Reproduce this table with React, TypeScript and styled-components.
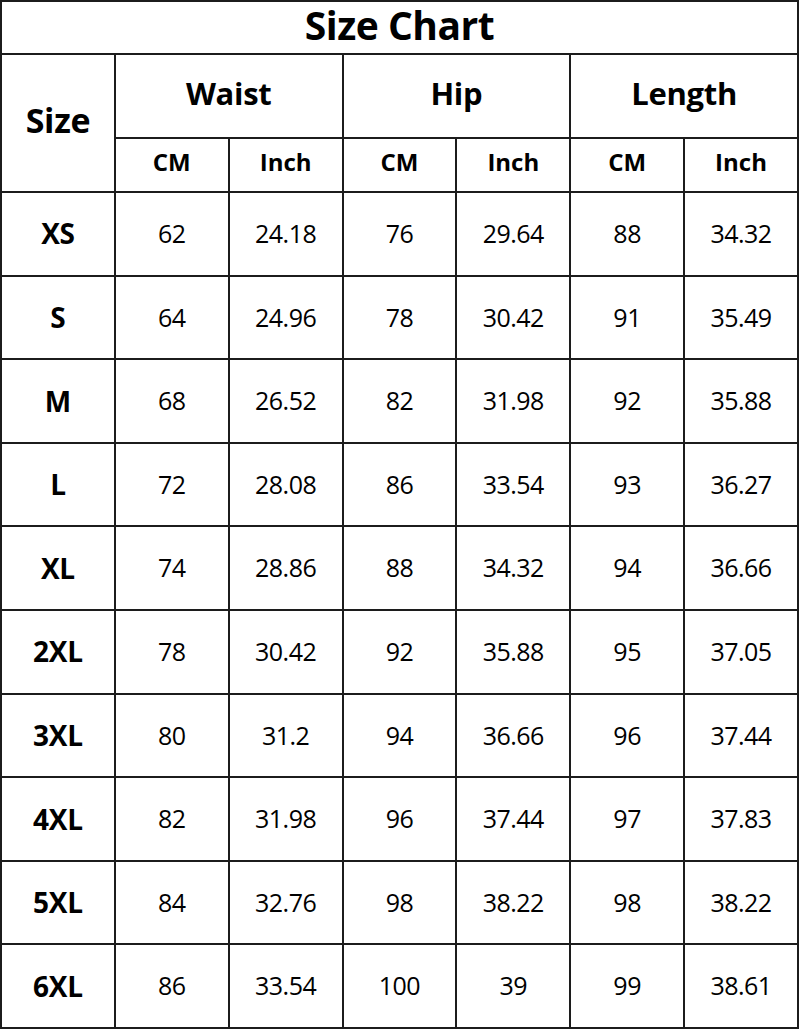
import {Fragment} from "react"
import styled, {createGlobalStyle} from "styled-components"

const rows: [string, string, string, string, string, string, string][] = [
    ["XS", "62", "24.18", "76", "29.64", "88", "34.32"],
    ["S", "64", "24.96", "78", "30.42", "91", "35.49"],
    ["M", "68", "26.52", "82", "31.98", "92", "35.88"],
    ["L", "72", "28.08", "86", "33.54", "93", "36.27"],
    ["XL", "74", "28.86", "88", "34.32", "94", "36.66"],
    ["2XL", "78", "30.42", "92", "35.88", "95", "37.05"],
    ["3XL", "80", "31.2", "94", "36.66", "96", "37.44"],
    ["4XL", "82", "31.98", "96", "37.44", "97", "37.83"],
    ["5XL", "84", "32.76", "98", "38.22", "98", "38.22"],
    ["6XL", "86", "33.54", "100", "39", "99", "38.61"],
]

const groups = ["Waist", "Hip", "Length"]

export default function App() {
    return (
        <>
            <GlobalStyle/>
            <Table>
                <colgroup>
                    {Array.from({length: 7}).map((_, i) => <col key={i}/>)}
                </colgroup>
                <thead>
                <tr>
                    <Title colSpan={7}>Size Chart</Title>
                </tr>
                <tr>
                    <GroupHead rowSpan={2} $size={34} $height={131}>Size</GroupHead>
                    {groups.map((g) => (
                        <GroupHead key={g} colSpan={2} $size={31} $height={77}>{g}</GroupHead>
                    ))}
                </tr>
                <tr>
                    {groups.map((g) => (
                        <Fragment key={g}>
                            <UnitHead>CM</UnitHead>
                            <UnitHead>Inch</UnitHead>
                        </Fragment>
                    ))}
                </tr>
                </thead>
                <tbody>
                {rows.map((r) => (
                    <tr key={r[0]}>
                        <SizeCell>{r[0]}</SizeCell>
                        {r.slice(1).map((v, i) => <Cell key={i}>{v}</Cell>)}
                    </tr>
                ))}
                </tbody>
            </Table>
        </>
    )
}

const GlobalStyle = createGlobalStyle`
    body {
        margin: 0;
        background: #fff;
        font-family: "Open Sans", "Noto Sans", sans-serif;
        color: #000;
    }
`

const Table = styled.table`
    width: 799px;
    table-layout: fixed;
    border-collapse: collapse;
    border: 2px solid #1c1c1c;

    td, th {
        border: 2px solid #1c1c1c;
        padding: 0;
        text-align: center;
        vertical-align: middle;
        line-height: 1.1;
    }
`

const Title = styled.th`
    height: 47px;
    font-size: 39px;
    font-weight: 700;
    letter-spacing: -0.5px;

    && {
        padding-bottom: 4px;
    }
`

const GroupHead = styled.th<{ $size: number; $height: number }>`
    height: ${(p) => p.$height}px;
    font-size: ${(p) => p.$size}px;
    font-weight: 700;
    letter-spacing: -0.3px;

    && {
        padding-bottom: 5px;
    }
`

const UnitHead = styled.th`
    height: 47px;
    font-size: 24px;
    font-weight: 700;

    && {
        padding-bottom: 5px;
    }
`

const SizeCell = styled.td`
    height: 81.6px;
    font-size: 28px;
    font-weight: 700;
    letter-spacing: -0.3px;
`

const Cell = styled.td`
    height: 81.6px;
    font-size: 25px;
    font-weight: 400;
    letter-spacing: -0.5px;
`
